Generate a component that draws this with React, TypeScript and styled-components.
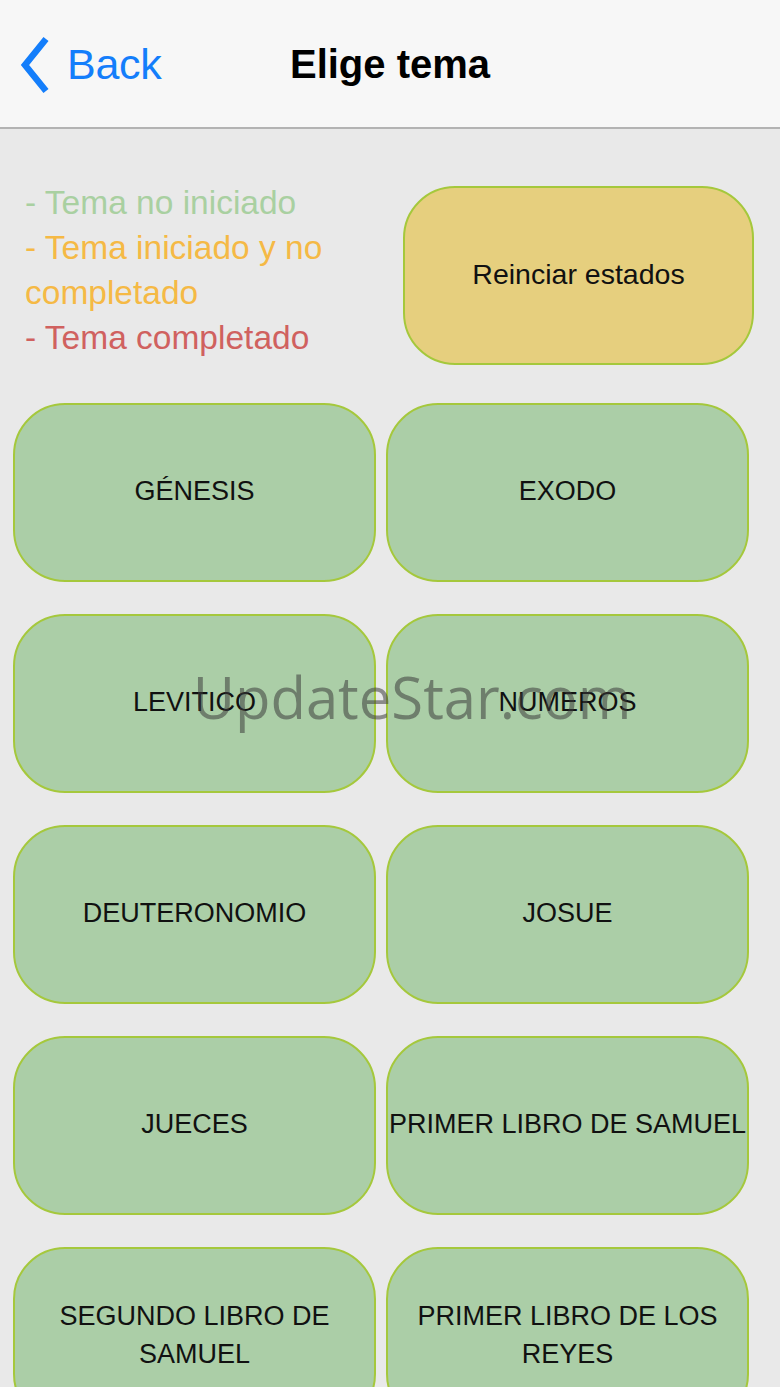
import styled, { createGlobalStyle } from 'styled-components';

const GlobalStyle = createGlobalStyle`
  html, body {
    margin: 0;
    padding: 0;
    background: #e9e9e9;
  }
  body {
    font-family: 'Liberation Sans', Arial, sans-serif;
    overflow: hidden;
  }
`;

const Screen = styled.div`
  position: relative;
  width: 780px;
  height: 1387px;
  overflow: hidden;
  background: #e9e9e9;
`;

const NavBar = styled.header`
  height: 127px;
  background: #f7f7f7;
  border-bottom: 2px solid #b3b3b3;
  display: flex;
  align-items: center;
  position: relative;
`;

const BackButton = styled.div`
  display: flex;
  align-items: center;
  gap: 17px;
  padding-left: 20px;
  color: #147efb;
  font-size: 43px;
  letter-spacing: -0.3px;
  margin-top: 2px;
`;

const Title = styled.h1`
  margin: 0;
  position: absolute;
  left: 0;
  right: 0;
  text-align: center;
  font-size: 40px;
  font-weight: bold;
  color: #000;
  pointer-events: none;
  margin-top: 2px;
`;

const Content = styled.main`
  padding: 57px 0 0;
`;

const Header = styled.section`
  display: flex;
  justify-content: space-between;
  align-items: flex-start;
  padding: 0 26px 0 25px;
`;

const Legend = styled.div`
  width: 350px;
  margin-top: -6px;
  font-size: 33.5px;
  line-height: 45px;
`;

const LegendItem = styled.div<{ $color: string }>`
  color: ${(p) => p.$color};
`;

const Pill = styled.button<{ $bg: string; $size?: number }>`
  box-sizing: border-box;
  height: 179px;
  border: 2px solid #a5c83c;
  border-radius: 52px;
  background: ${(p) => p.$bg};
  font-family: 'Liberation Sans', Arial, sans-serif;
  font-size: ${(p) => p.$size ?? 27}px;
  line-height: 38px;
  color: #111;
  padding: 0 0 4px;
  display: flex;
  align-items: center;
  justify-content: center;
  text-align: center;
`;

const ResetButton = styled(Pill)`
  width: 351px;
`;

const Grid = styled.section`
  display: grid;
  grid-template-columns: 363px 363px;
  column-gap: 10px;
  row-gap: 32px;
  padding: 38px 0 0 13px;
`;

const Watermark = styled.div`
  position: absolute;
  left: 0;
  right: 0;
  top: 657px;
  text-align: center;
  font-family: 'Open Sans', sans-serif;
  font-size: 58px;
  color: rgba(60, 60, 60, 0.55);
  pointer-events: none;
  padding-left: 44px;
`;

const books = [
  'GÉNESIS',
  'EXODO',
  'LEVITICO',
  'NUMEROS',
  'DEUTERONOMIO',
  'JOSUE',
  'JUECES',
  'PRIMER LIBRO DE SAMUEL',
  'SEGUNDO LIBRO DE SAMUEL',
  'PRIMER LIBRO DE LOS REYES',
];

export default function App() {
  return (
    <Screen>
      <GlobalStyle />
      <NavBar>
        <BackButton>
          <svg width="30" height="58" viewBox="0 0 30 58">
            <path d="M26 3 L5 29 L26 55" fill="none" stroke="#147efb" strokeWidth="6.5" />
          </svg>
          <span>Back</span>
        </BackButton>
        <Title>Elige tema</Title>
      </NavBar>
      <Content>
        <Header>
          <Legend>
            <LegendItem $color='#a9d0a1'>- Tema no iniciado</LegendItem>
            <LegendItem $color='#f5b945'>- Tema iniciado y no completado</LegendItem>
            <LegendItem $color='#d0615f'>- Tema completado</LegendItem>
          </Legend>
          <ResetButton $bg='#e6cf7e' $size={28.5}>Reinciar estados</ResetButton>
        </Header>
        <Grid>
          {books.map((b) => (
            <Pill key={b} $bg='#abcea7'>
              {b === 'SEGUNDO LIBRO DE SAMUEL' ? (
                <span>SEGUNDO LIBRO DE<br />SAMUEL</span>
              ) : b === 'PRIMER LIBRO DE LOS REYES' ? (
                <span>PRIMER LIBRO DE LOS<br />REYES</span>
              ) : (
                <span>{b}</span>
              )}
            </Pill>
          ))}
        </Grid>
      </Content>
      <Watermark>UpdateStar.com</Watermark>
    </Screen>
  );
}
